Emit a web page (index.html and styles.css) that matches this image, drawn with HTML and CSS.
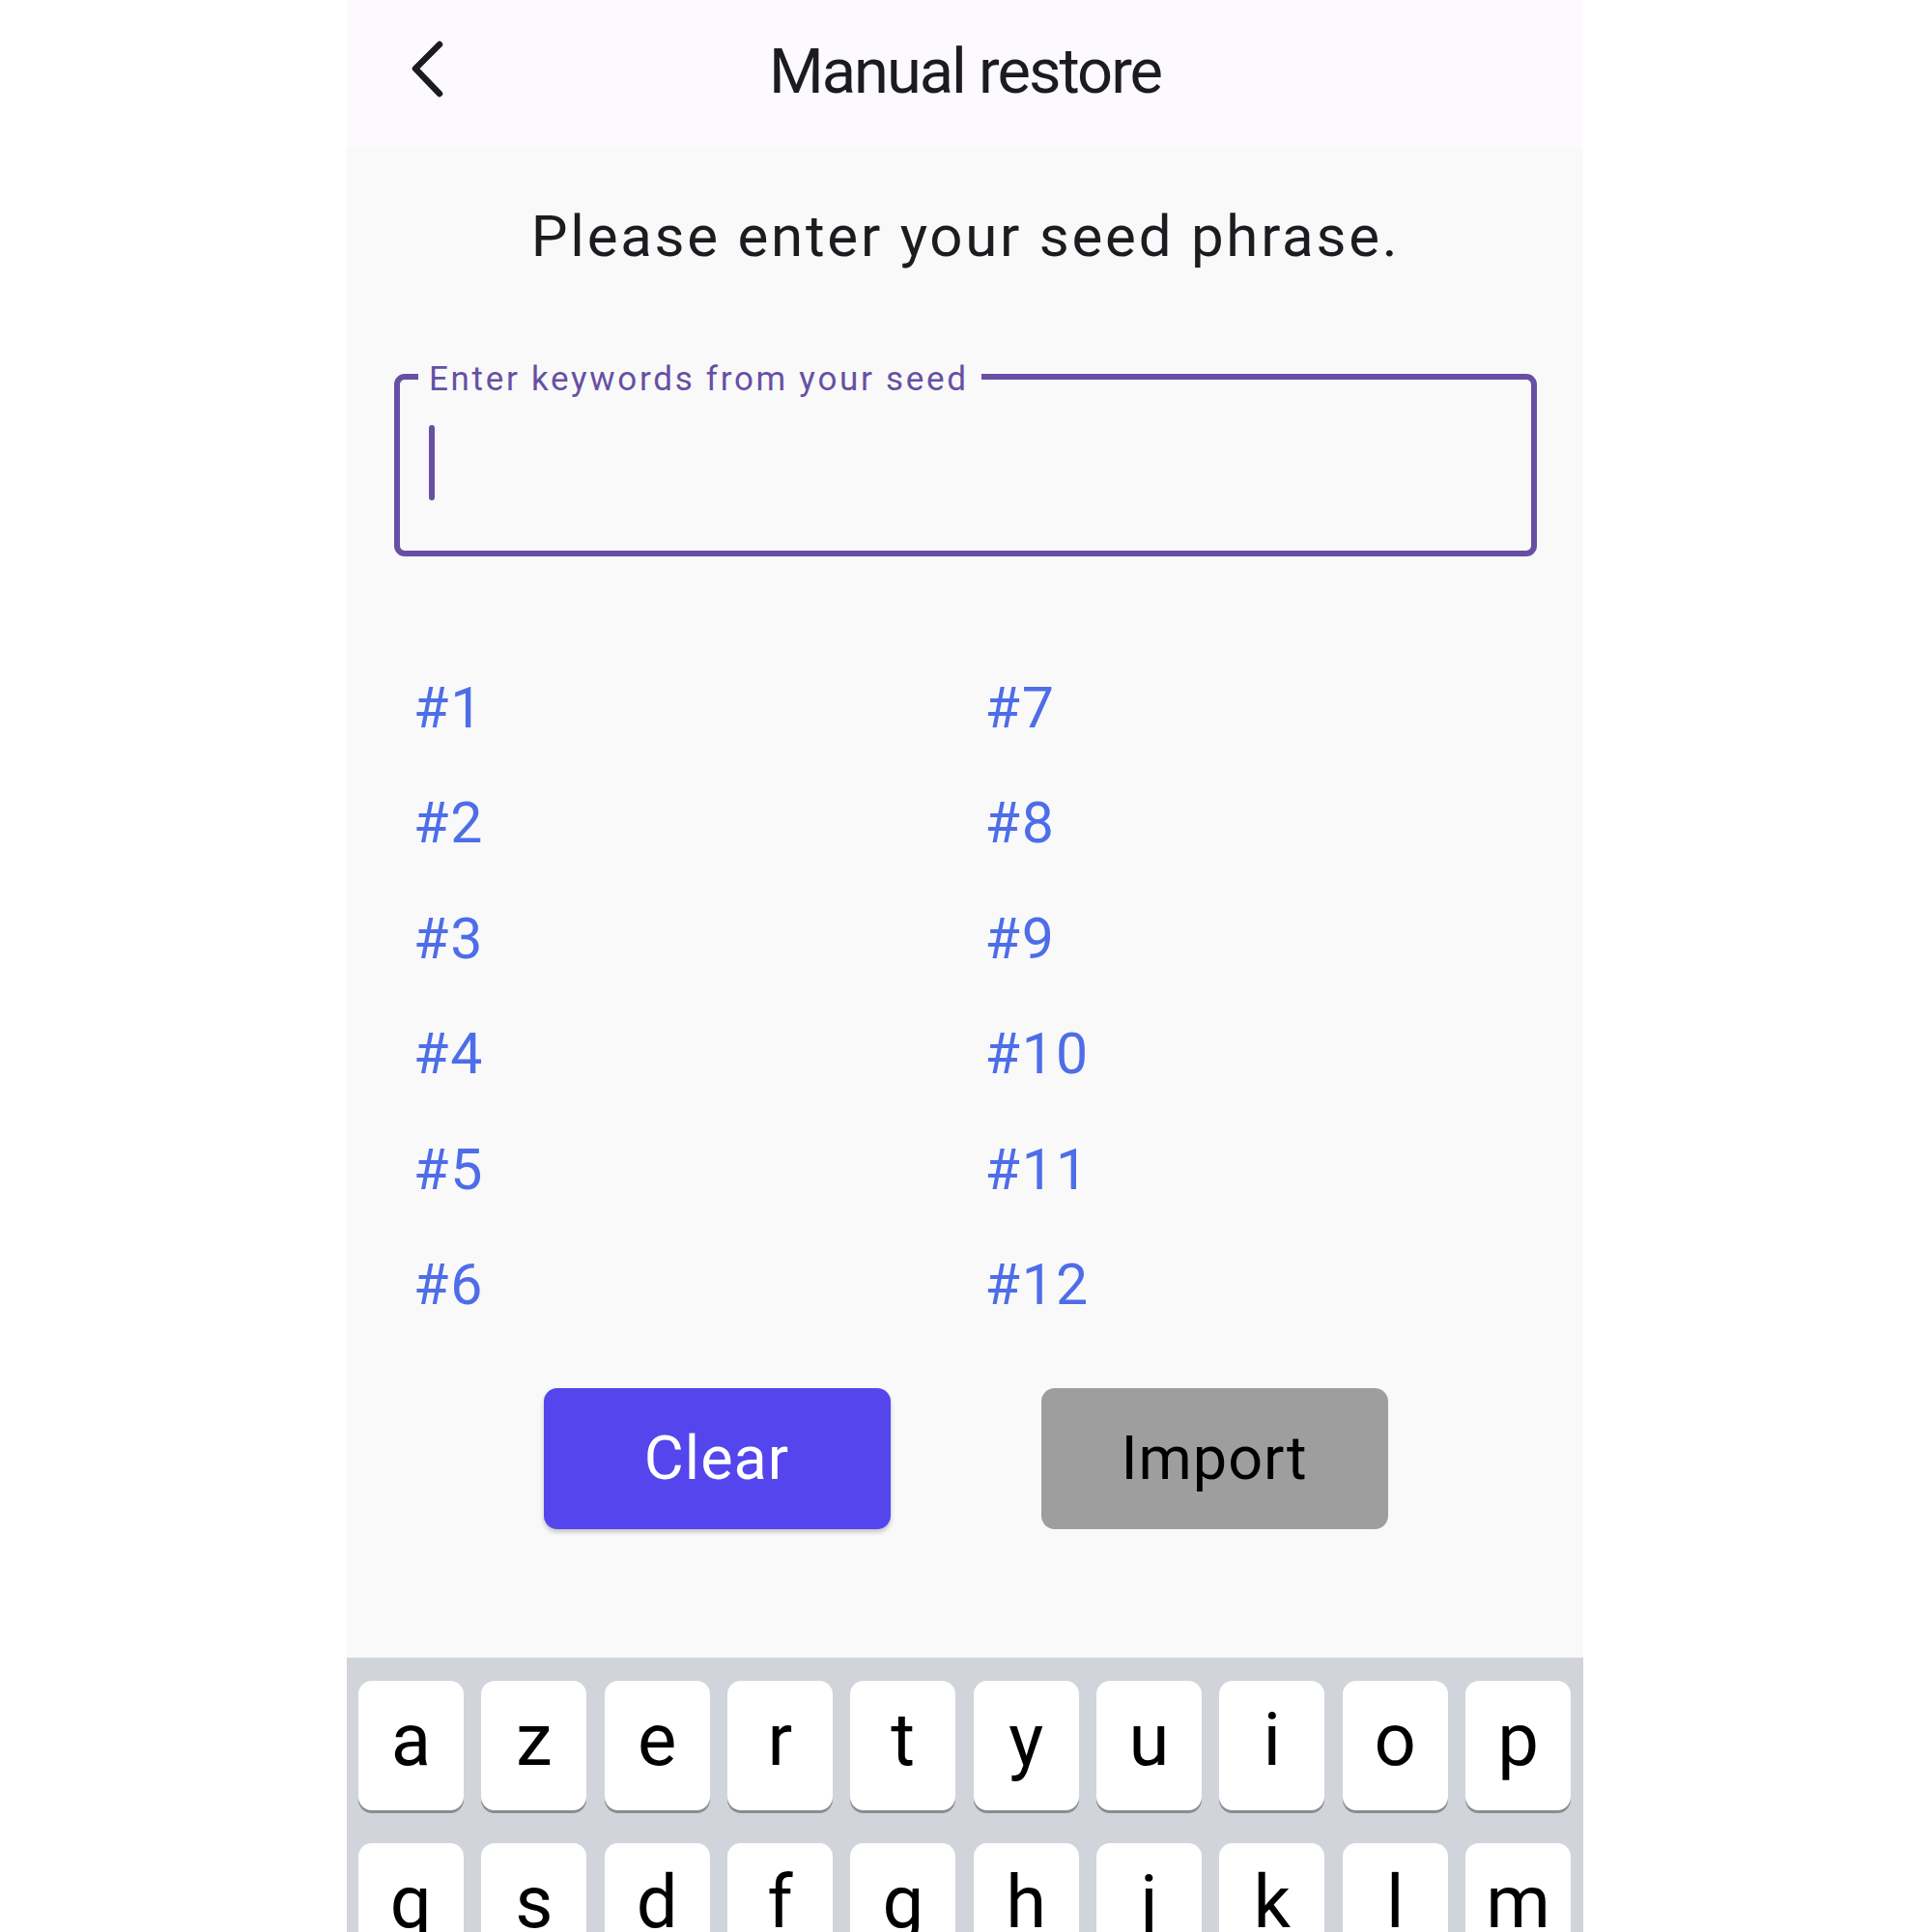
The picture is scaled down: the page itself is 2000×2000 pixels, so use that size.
FILE: index.html
```html
<!DOCTYPE html>
<html lang="en">
<head>
<meta charset="utf-8">
<title>Manual restore</title>
<link rel="stylesheet" href="styles.css">
</head>
<body>
<div class="phone">
  <header class="appbar">
    <div class="appbar-lead">
      <svg class="back-icon" width="40" height="64" viewBox="0 0 40 64" aria-hidden="true">
        <polyline points="34,6 9,31 34,57" fill="none" stroke="#1c1b1f" stroke-width="6.5" stroke-linecap="round" stroke-linejoin="round"/>
      </svg>
    </div>
    <h1 class="appbar-title">Manual restore</h1>
    <div class="appbar-trail"></div>
  </header>

  <main class="content">
    <p class="intro">Please enter your seed phrase.</p>

    <div class="field">
      <span class="field-label">Enter keywords from your seed</span>
      <span class="caret"></span>
    </div>

    <ol class="words">
      <li>#1</li><li>#2</li><li>#3</li><li>#4</li><li>#5</li><li>#6</li>
      <li>#7</li><li>#8</li><li>#9</li><li>#10</li><li>#11</li><li>#12</li>
    </ol>

    <div class="actions">
      <button class="btn btn-clear">Clear</button>
      <button class="btn btn-import">Import</button>
    </div>
  </main>

  <section class="keyboard">
    <div class="kb-row">
      <span class="key">a</span><span class="key">z</span><span class="key">e</span><span class="key">r</span><span class="key">t</span><span class="key">y</span><span class="key">u</span><span class="key">i</span><span class="key">o</span><span class="key">p</span>
    </div>
    <div class="kb-row">
      <span class="key">q</span><span class="key">s</span><span class="key">d</span><span class="key">f</span><span class="key">g</span><span class="key">h</span><span class="key">j</span><span class="key">k</span><span class="key">l</span><span class="key">m</span>
    </div>
  </section>
</div>
</body>
</html>
```

FILE: styles.css
```css
* { box-sizing: border-box; }

html, body {
  margin: 0;
  padding: 0;
  background: #ffffff;
}

body {
  font-family: Roboto, "Liberation Sans", sans-serif;
  color: #1c1b1f;
}

.phone {
  width: 1280px;
  height: 2000px;
  margin-left: 359px;
  display: flex;
  flex-direction: column;
  overflow: hidden;
}

/* App bar */
.appbar {
  height: 153px;
  flex: none;
  background: #fcfafc;
  display: grid;
  grid-template-columns: 1fr auto 1fr;
  align-items: center;
  padding-bottom: 5px;
}

.appbar-lead {
  padding-left: 62px;
  display: flex;
  align-items: center;
  padding-bottom: 4px;
}

.back-icon { display: block; }

.appbar-title {
  margin: 0;
  font-size: 65px;
  font-weight: 400;
  line-height: 80px;
  letter-spacing: -2px;
  color: #1c1b1f;
}

/* Content */
.content {
  flex: 1;
  background: #f9f9f9;
  padding: 0 48px 0 49px;
  display: flex;
  flex-direction: column;
}

.intro {
  margin: 52px 0 0;
  text-align: center;
  font-size: 60px;
  line-height: 80px;
  letter-spacing: 2.75px;
  color: #1c1b1f;
}

.field {
  position: relative;
  margin-top: 102px;
  height: 189px;
  border: 6px solid #6750a4;
  border-radius: 11px;
  padding: 47px 0 0 30px;
}

.field-label {
  position: absolute;
  left: 19px;
  top: -20px;
  padding: 0 13px 0 11px;
  background: #f9f9f9;
  font-size: 35px;
  line-height: 40px;
  letter-spacing: 2.7px;
  color: #6750a4;
  white-space: nowrap;
}

.caret {
  display: block;
  width: 6px;
  height: 78px;
  border-radius: 3px;
  background: #6750a4;
}

/* Word slots */
.words {
  list-style: none;
  margin: 97px 0 0;
  padding: 0;
  display: grid;
  grid-template-columns: 1fr 1fr;
  grid-template-rows: repeat(6, 119.4px);
  grid-auto-flow: column;
}

.words li {
  padding-left: 20px;
  font-size: 59px;
  line-height: 119.4px;
  letter-spacing: 2px;
  color: #4e6de8;
}

/* Buttons */
.actions {
  margin-top: 48px;
  display: flex;
  justify-content: center;
  gap: 156px;
}

.btn {
  width: 359px;
  height: 146px;
  border: none;
  border-radius: 14px;
  font-family: Roboto, "Liberation Sans", sans-serif;
  font-size: 63px;
  line-height: 80px;
  letter-spacing: 1px;
  padding: 0;
}

.btn-clear {
  background: #5446ec;
  color: #ffffff;
  box-shadow: 0 3px 5px rgba(0, 0, 0, 0.22);
}

.btn-import {
  background: #9e9e9e;
  color: #000000;
}

/* Keyboard */
.keyboard {
  flex: none;
  height: 284px;
  background: #d1d4da;
  padding: 24px 13px 0 12px;
  display: flex;
  flex-direction: column;
  gap: 34px;
}

.kb-row {
  display: flex;
  gap: 18.5px;
}

.key {
  flex: 1;
  height: 134px;
  flex-shrink: 0;
  background: #ffffff;
  border-radius: 14px;
  box-shadow: 0 3px 0 #8b8c90;
  display: flex;
  justify-content: center;
  align-items: center;
  padding-bottom: 12px;
  font-size: 76px;
  line-height: 122px;
  color: #000000;
}
```
